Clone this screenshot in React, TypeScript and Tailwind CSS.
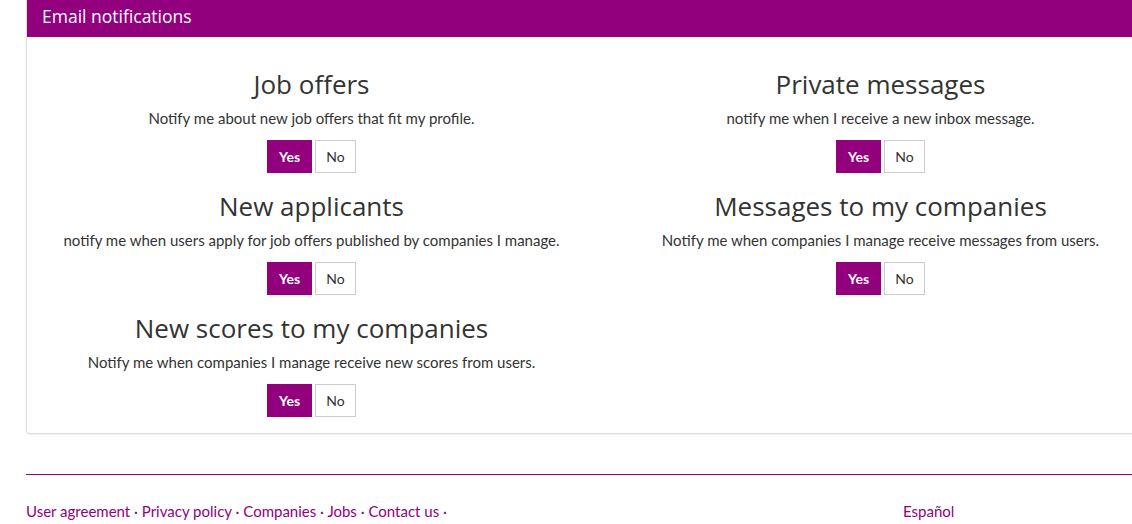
import React from "react";

const headFont = { fontFamily: '"Open Sans", "DejaVu Sans", sans-serif' };

type Pref = { title: string; text: string; on: boolean };

const prefs: Pref[] = [
  { title: "Job offers", text: "Notify me about new job offers that fit my profile.", on: true },
  { title: "Private messages", text: "notify me when I receive a new inbox message.", on: true },
  { title: "New applicants", text: "notify me when users apply for job offers published by companies I manage.", on: true },
  { title: "Messages to my companies", text: "Notify me when companies I manage receive messages from users.", on: true },
  { title: "New scores to my companies", text: "Notify me when companies I manage receive new scores from users.", on: true },
];

function PrefBlock({ title, text, on }: Pref) {
  return (
    <div className="flex flex-col items-center h-[122px]">
      <h3 className="text-[26px] leading-[30px] text-[#333] mt-[2px]" style={headFont}>
        {title}
      </h3>
      <p className="text-[15px] leading-[20px] text-[#333] mt-[9px]">{text}</p>
      <div className="flex gap-[3px] mt-[12px]">
        <button
          className={
            on
              ? "w-[45px] h-[33px] bg-[#92007d] text-white text-[14px] font-bold"
              : "w-[45px] h-[33px] bg-white border border-[#ccc] text-[#333] text-[14px]"
          }
        >
          Yes
        </button>
        <button
          className={
            !on
              ? "w-[41px] h-[33px] bg-[#92007d] text-white text-[14px] font-bold"
              : "w-[41px] h-[33px] bg-white border border-[#ccc] text-[#333] text-[14px]"
          }
        >
          No
        </button>
      </div>
    </div>
  );
}

export default function App(): React.JSX.Element {
  return (
    <div className="w-[1132px] h-[524px] overflow-hidden bg-white" style={{ fontFamily: '"Lato", "Liberation Sans", sans-serif' }}>
      <div className="ml-[26px] w-[1140px]">
        <div className="border border-[#ddd] border-t-0 rounded-b-[4px] shadow-[0_1px_2px_rgba(0,0,0,0.08)]">
          <div className="h-[37px] bg-[#92007d] px-[15px] flex items-center">
            <span className="text-white text-[17.5px] font-medium leading-none mb-[3px]" style={headFont}>
              Email notifications
            </span>
          </div>
          <div className="grid grid-cols-2 pt-[30px]">
            {prefs.map((p) => (
              <PrefBlock key={p.title} {...p} />
            ))}
          </div>
        </div>

        <div className="mt-[40px] h-px bg-[#92007d]" />

        <div className="flex mt-[26px] text-[15px] leading-[20px] text-[#92007d]">
          <div className="w-[877px]">
            User agreement · Privacy policy · Companies · Jobs · Contact us ·
          </div>
          <div>Español</div>
        </div>
      </div>
    </div>
  );
}
